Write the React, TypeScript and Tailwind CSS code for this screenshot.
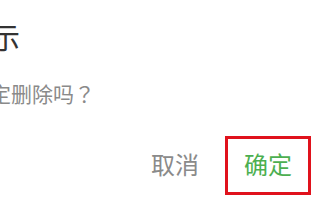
import React from "react";

export default function App() {
  const font = { fontFamily: '"Noto Sans CJK SC", "Noto Sans", sans-serif' };
  return (
    <div
      className="w-[320px] h-[200px] overflow-hidden bg-white flex flex-col"
      style={font}
    >
      <div className="mt-[22px] ml-[-38px] text-[29px] leading-[29px] text-[#333333] whitespace-nowrap">
        提示
      </div>
      <div className="mt-[32px] ml-[-31px] text-[21px] leading-[21px] text-[#8a8a8a] whitespace-nowrap">
        确定删除吗<span className="[font-family:'Noto_Sans_CJK_JP',sans-serif]">？</span>
      </div>
      <div className="mt-[32px] flex justify-end items-start pr-[9px]">
        <span className="mt-[16px] text-[24px] leading-[24px] text-[#8a8a8a]">取消</span>
        <div className="ml-[26px] border-[3px] border-[#e0121c] pt-[13px] pb-[16px] px-[16px]">
          <span className="block text-[24px] leading-[24px] text-[#4caf50]">确定</span>
        </div>
      </div>
    </div>
  );
}
